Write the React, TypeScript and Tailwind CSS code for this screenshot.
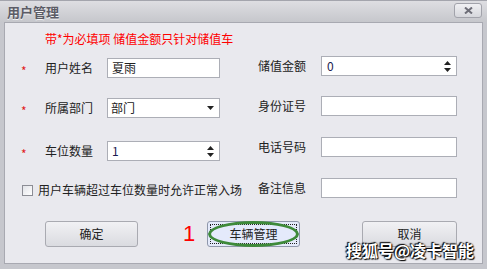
import React from "react";

const F = { fontFamily: '"Noto Sans CJK SC", "Noto Sans", sans-serif' };

function Star() {
  return <span className="w-[24px] ml-[16px] text-[#e02020] text-[12px] leading-none pt-[6px]">*</span>;
}

function Spinner() {
  return (
    <div className="flex flex-col items-center gap-[3px] mr-[5px]">
      <svg width="7" height="4" viewBox="0 0 7 4"><path d="M3.5 0L7 4H0z" fill="#222" /></svg>
      <svg width="7" height="4" viewBox="0 0 7 4"><path d="M0 0H7L3.5 4z" fill="#222" /></svg>
    </div>
  );
}

export default function App() {
  return (
    <div className="w-[487px] h-[269px] bg-[#c6c7cd] flex flex-col relative overflow-hidden" style={F}>
      {/* title bar */}
      <div className="h-[22px] flex items-center justify-between bg-gradient-to-b from-[#dedee2] to-[#c6c7cc] border-t border-[#a4a5ad] pl-[7px] pr-[5px]">
        <span className="text-[13px] font-bold text-[#5c5c66] leading-none [text-shadow:0_1px_0_#f4f4f6]">用户管理</span>
        <div className="w-[28px] h-[15px] mb-[3px] rounded-[3px] border border-[#a2a3ab] bg-gradient-to-b from-[#f0f0f3] to-[#d6d7dc] flex items-center justify-center">
          <svg width="9" height="7" viewBox="0 0 9 7"><path d="M1 0.5L8 6.5M8 0.5L1 6.5" stroke="#6e6e78" strokeWidth="2" /></svg>
        </div>
      </div>
      {/* panel */}
      <div className="mx-[4px] h-[242px] border border-[#a8a9b1] bg-[#e9e9ee] flex flex-col text-[12px] text-[#222]">
        <div className="ml-[40px] mt-[8px] leading-[16px] text-[#ff0000] text-[12px]">带*为必填项 储值金额只针对储值车</div>
        <div className="flex">
          {/* left column */}
          <div className="w-[253px] flex flex-col">
            <div className="flex items-center h-[20px] mt-[11px]">
              <Star />
              <span className="w-[62px]">用户姓名</span>
              <div className="w-[113px] h-[20px] bg-white border border-[#acaeb6] flex items-center pl-[4px]">夏雨</div>
            </div>
            <div className="flex items-center h-[20px] mt-[20px]">
              <Star />
              <span className="w-[62px]">所属部门</span>
              <div className="w-[113px] h-[20px] bg-white border border-[#acaeb6] flex items-center justify-between pl-[3px] pr-[5px]">
                <span>部门</span>
                <svg width="7" height="4" viewBox="0 0 7 4"><path d="M0 0H7L3.5 4z" fill="#222" /></svg>
              </div>
            </div>
            <div className="flex items-center h-[20px] mt-[23px]">
              <Star />
              <span className="w-[62px]">车位数量</span>
              <div className="w-[113px] h-[20px] bg-white border border-[#acaeb6] flex items-center justify-between pl-[4px]">
                <span className="text-[#1a1a50]">1</span>
                <Spinner />
              </div>
            </div>
            <div className="flex items-center h-[16px] mt-[21px] ml-[17px]">
              <div className="w-[11px] h-[11px] border border-[#8c8d95] bg-gradient-to-br from-[#e2e3e8] to-white mr-[5px]" />
              <span>用户车辆超过车位数量时允许正常入场</span>
            </div>
          </div>
          {/* right column */}
          <div className="flex flex-col">
            <div className="flex items-center h-[20px] mt-[9px]">
              <span className="w-[63px]">储值金额</span>
              <div className="w-[136px] h-[20px] bg-white border border-[#acaeb6] flex items-center justify-between pl-[5px]">
                <span className="text-[#1a1a50]">0</span>
                <Spinner />
              </div>
            </div>
            <div className="flex items-center h-[20px] mt-[20px]">
              <span className="w-[63px]">身份证号</span>
              <div className="w-[136px] h-[20px] bg-white border border-[#acaeb6]" />
            </div>
            <div className="flex items-center h-[20px] mt-[21px]">
              <span className="w-[63px]">电话号码</span>
              <div className="w-[136px] h-[20px] bg-white border border-[#acaeb6]" />
            </div>
            <div className="flex items-center h-[20px] mt-[21px]">
              <span className="w-[63px]">备注信息</span>
              <div className="w-[136px] h-[20px] bg-white border border-[#acaeb6]" />
            </div>
          </div>
        </div>
        {/* buttons */}
        <div className="flex items-center mt-[23px] ml-[40px]">
          <button className="w-[93px] h-[26px] rounded-[3px] border border-[#a9aab1] bg-gradient-to-b from-[#f1f1f4] to-[#dadbe0] text-[12px] text-[#222]">确定</button>
          <span className="ml-[45px] w-[24px] text-[22px] leading-none text-[#ff0000]" style={{ fontFamily: '"Liberation Sans", sans-serif' }}>1</span>
          <div className="relative w-[93px] h-[26px]">
            <button className="w-full h-full rounded-[3px] border border-[#8f97ab] bg-[#e4eafb] p-[2px]">
              <div className="w-full h-full border border-dotted border-[#222] flex items-center justify-center text-[12px] text-[#222]">车辆管理</div>
            </button>
            <div className="absolute left-[1px] right-[1px] top-0 bottom-0 rounded-[50%] border-[3px] border-[#3e8a3a]" />
          </div>
          <button className="ml-[62px] w-[95px] h-[26px] rounded-[3px] border border-[#a9aab1] bg-gradient-to-b from-[#f1f1f4] to-[#dadbe0] text-[12px] text-[#222]">取消</button>
        </div>
      </div>
      {/* watermark */}
      <div className="absolute left-[346px] top-[240px] text-[16px] font-bold text-white leading-[20px] [text-shadow:0_0_2px_#000,1px_1px_1px_#000,-1px_-1px_1px_#000]">搜狐号@凌卡智能</div>
    </div>
  );
}
